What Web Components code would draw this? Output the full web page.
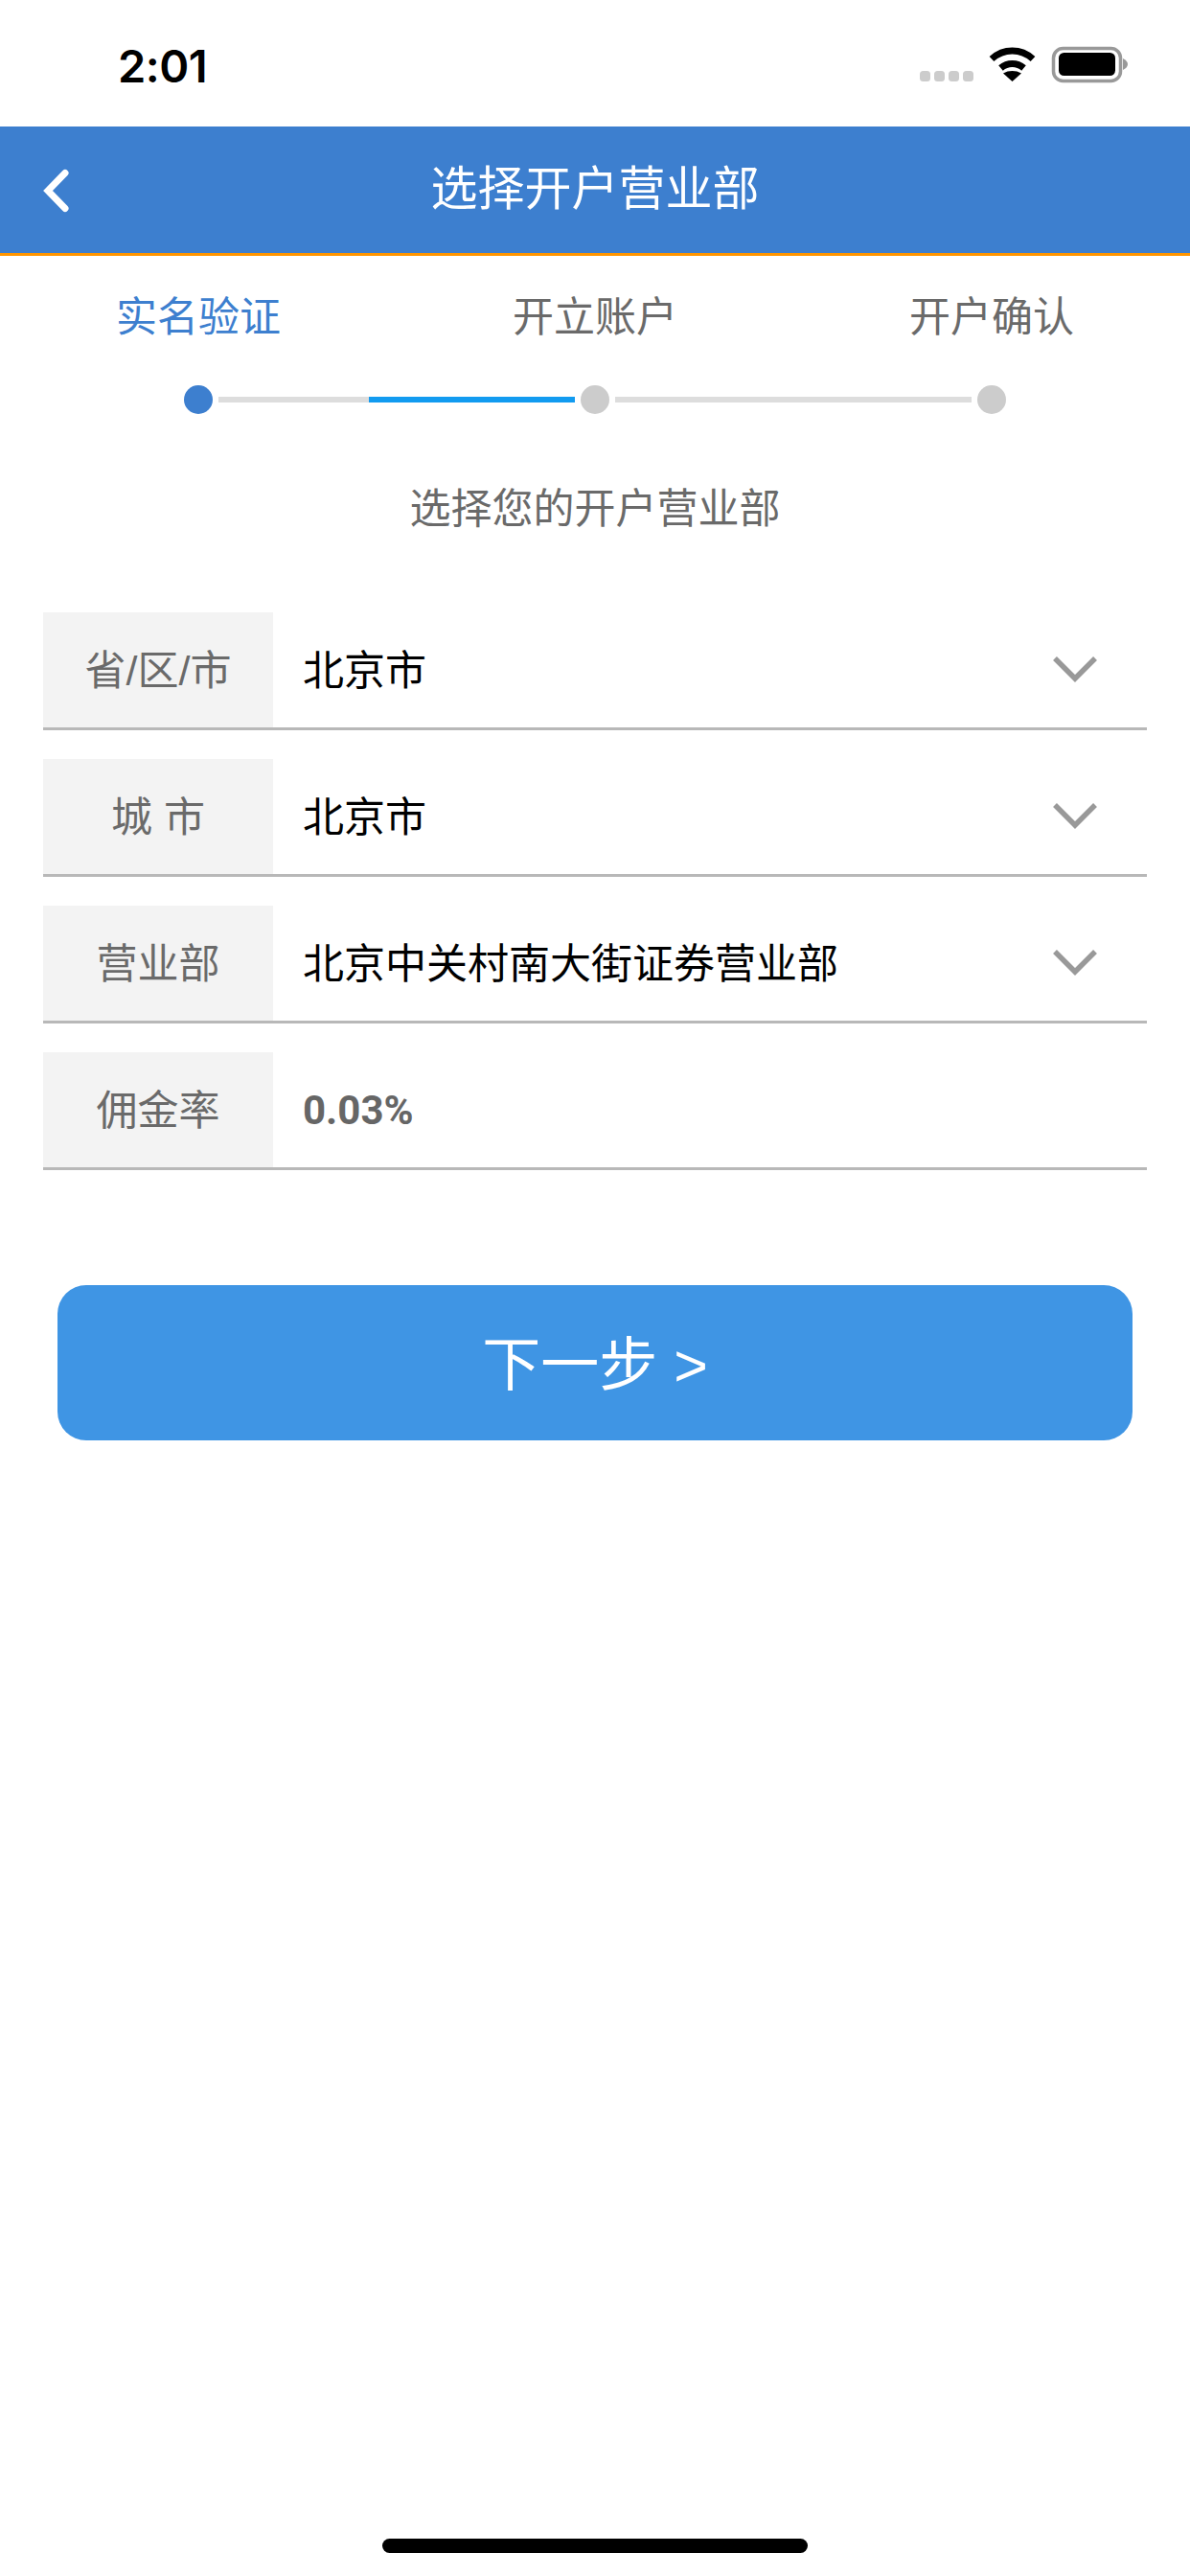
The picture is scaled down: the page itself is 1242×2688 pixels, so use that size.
<!DOCTYPE html>
<html lang="zh-CN">
<head>
<meta charset="utf-8">
<title>选择开户营业部</title>
<style>
  html, body { margin: 0; padding: 0; background: #fff; }
  body { width: 1242px; height: 2688px; font-family: "Liberation Sans", "Noto Sans CJK SC", sans-serif; overflow: hidden; }
  app-screen { width: 1242px; height: 2688px; }
</style>
</head>
<body>
<app-screen>
  <status-bar time="2:01"></status-bar>
  <nav-bar>选择开户营业部</nav-bar>
  <step-bar></step-bar>
  <p-subtitle>选择您的开户营业部</p-subtitle>
  <form-row label="省/区/市" select>北京市</form-row>
  <form-row label="城 市" select>北京市</form-row>
  <form-row label="营业部" select>北京中关村南大街证券营业部</form-row>
  <form-row label="佣金率" muted>0.03%</form-row>
  <next-button>下一步 &gt;</next-button>
  <home-bar></home-bar>
</app-screen>

<script>
// little helper, every element has the same shadow setup
function shadow(el, html) {
  el.attachShadow({ mode: 'open' }).innerHTML = html;
}

class AppScreen extends HTMLElement {
  constructor() {
    super();
    shadow(this, `
      <style>
        :host { display: flex; flex-direction: column; background: #fff; position: relative; }
      </style>
      <slot></slot>`);
  }
}

class StatusBar extends HTMLElement {
  connectedCallback() {
    shadow(this, `
      <style>
        :host { display: flex; height: 132px; box-sizing: border-box; padding: 30px 42px 0 123px; justify-content: space-between; align-items: flex-start; }
        .time { font: 600 47px/62px Inter, "Liberation Sans", sans-serif; color: #000; letter-spacing: -0.5px; margin-top: 8px; }
        svg { display: block; }
      </style>
      <div class="time">${this.getAttribute('time')}</div>
      <svg width="260" height="70" viewBox="940 30 260 70">
        <g fill="#ccc">
          <rect x="960" y="74" width="11" height="11" rx="3.500"/>
          <rect x="975" y="74" width="11" height="11" rx="3.500"/>
          <rect x="990" y="74" width="11" height="11" rx="3.500"/>
          <rect x="1005" y="74" width="11" height="11" rx="3.500"/>
        </g>
        <path d="M1035 61.500C1041 56 1048 53 1056.500 53S1072 56 1078 61.500" fill="none" stroke="#000" stroke-width="7"/>
        <path d="M1044.500 71C1048 68 1052 66.500 1056.500 66.500S1065 68 1068.500 71" fill="none" stroke="#000" stroke-width="7"/>
        <path d="M1056.500 85L1047 76.500C1050 74.800 1053 74 1056.500 74S1063 74.800 1066 76.500Z" fill="#000"/>
        <rect x="1099.500" y="50.500" width="70" height="34" rx="10" fill="none" stroke="#999" stroke-width="3.500"/>
        <rect x="1105" y="55" width="59" height="24" rx="5.500" fill="#000"/>
        <path d="M1172 61C1175 62.500 1177 64.500 1177 67S1175 71.500 1172 73Z" fill="#999"/>
      </svg>`);
  }
}

class NavBar extends HTMLElement {
  constructor() {
    super();
    shadow(this, `
      <style>
        :host { display: flex; height: 135px; box-sizing: border-box; padding-bottom: 12px; background: #3d7fcf; border-bottom: 3px solid #ff9500; color: #fff; font-size: 49px; align-items: center; justify-content: center; position: relative; }
        .back { position: absolute; left: 44px; top: 44px; display: block; }
      </style>
      <svg class="back" width="32" height="50" viewBox="0 0 32 50">
        <path d="M24 4.500L6 23L24 41.500" fill="none" stroke="#fff" stroke-width="7" stroke-linecap="round"/>
      </svg>
      <span><slot></slot></span>`);
  }
}

class StepBar extends HTMLElement {
  constructor() {
    super();
    shadow(this, `
      <style>
        :host { display: block; padding-top: 40px; }
        .labels { display: grid; grid-template-columns: 414px 414px 414px; font-size: 43px; line-height: 48px; color: #6a6a6a; text-align: center; }
        .labels .on { color: #3d7fcf; }
        .track { display: flex; align-items: center; height: 30px; margin: 47px 192px 0; }
        .dot { width: 30px; height: 30px; border-radius: 50%; background: #ccc; flex: none; }
        .dot.on { background: #3d7fcf; }
        .seg { height: 6px; flex: 1; margin: 0 6px; background: #ddd; display: flex; }
        .seg i { display: block; height: 6px; }
        .seg .g { width: 157px; background: #ddd; }
        .seg .b { flex: 1; background: #129bf0; }
      </style>
      <div class="labels"><div class="on">实名验证</div><div>开立账户</div><div>开户确认</div></div>
      <div class="track">
        <div class="dot on"></div>
        <div class="seg"><i class="g"></i><i class="b"></i></div>
        <div class="dot"></div>
        <div class="seg"></div>
        <div class="dot"></div>
      </div>`);
  }
}

class PSubtitle extends HTMLElement {
  constructor() {
    super();
    shadow(this, `
      <style>
        :host { display: block; text-align: center; font-size: 43px; line-height: 48px; color: #6a6a6a; margin-top: 75px; margin-bottom: 84px; }
      </style>
      <slot></slot>`);
  }
}

class FormRow extends HTMLElement {
  connectedCallback() {
    const chevron = this.hasAttribute('select')
      ? `<svg class="chev" width="48" height="30" viewBox="0 0 48 30"><path d="M3 3L24 24L45 3" fill="none" stroke="#999" stroke-width="5.500"/></svg>`
      : '';
    shadow(this, `
      <style>
        :host { display: flex; height: 123px; box-sizing: border-box; margin: 0 45px 30px; border-bottom: 3px solid #b8b8b8; }
        .label { width: 240px; flex: none; box-sizing: border-box; padding-bottom: 6px; background: #f3f3f3; color: #6a6a6a; font-size: 43px; display: flex; align-items: center; justify-content: center; white-space: pre; }
        .value { flex: 1; box-sizing: border-box; padding: 0 0 6px 31px; font-size: 43px; color: #000; display: flex; align-items: center; }
        :host([muted]) .value { color: #666; padding-bottom: 0; font: 700 42px "Roboto", "Liberation Sans", sans-serif; }
        .chev { flex: none; margin-right: 51px; align-self: center; display: block; }
      </style>
      <div class="label">${this.getAttribute('label')}</div>
      <div class="value"><slot></slot></div>
      ${chevron}`);
  }
}

class NextButton extends HTMLElement {
  constructor() {
    super();
    shadow(this, `
      <style>
        :host { display: flex; align-items: center; justify-content: center; height: 162px; box-sizing: border-box; padding-bottom: 6px; margin: 90px 60px 0; background: #3f95e4; border-radius: 30px; color: #fff; font-size: 61px; }
      </style>
      <slot></slot>`);
  }
}

class HomeBar extends HTMLElement {
  constructor() {
    super();
    shadow(this, `
      <style>
        :host { display: block; position: absolute; left: 399px; top: 2649px; width: 444px; height: 15px; border-radius: 8px; background: #000; }
      </style>`);
  }
}

customElements.define('app-screen', AppScreen);
customElements.define('status-bar', StatusBar);
customElements.define('nav-bar', NavBar);
customElements.define('step-bar', StepBar);
customElements.define('p-subtitle', PSubtitle);
customElements.define('form-row', FormRow);
customElements.define('next-button', NextButton);
customElements.define('home-bar', HomeBar);
</script>
</body>
</html>
